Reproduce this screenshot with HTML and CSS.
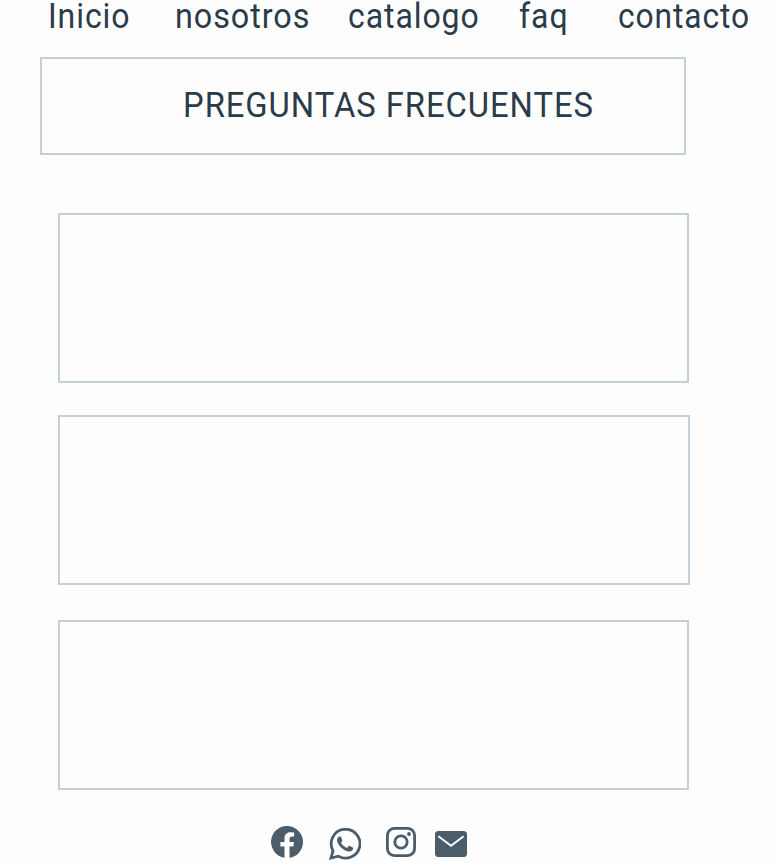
FILE: index.html
```html
<!DOCTYPE html>
<html lang="es">
<head>
<meta charset="utf-8">
<title>Preguntas frecuentes</title>
<link rel="stylesheet" href="styles.css">
</head>
<body>
<nav class="nav">
<a class="inicio">Inicio</a><a class="nosotros">nosotros</a><a class="catalogo">catalogo</a><a class="faq">faq</a><a class="contacto">contacto</a>
</nav>
<main>
<header class="title"><h1>PREGUNTAS FRECUENTES</h1></header>
<section class="panel"></section>
<section class="panel wide"></section>
<section class="panel last"></section>
</main>
<footer class="social">
<svg class="facebook" width="32" height="32" viewBox="0 0 32 32"><path fill="currentColor" d="M32 16A16 16 0 1 0 13.5 31.8V20.6H9.4V16h4.1v-3.5c0-4 2.4-6.2 6-6.2 1.8 0 3.6.3 3.6.3v3.9h-2c-2 0-2.6 1.2-2.6 2.5v3H23l-.7 4.6h-3.8v11.2A16 16 0 0 0 32 16Z"/></svg>
<svg class="whatsapp" width="32" height="32" viewBox="0 0 24 24"><path fill="currentColor" d="M17.47 14.38c-.3-.15-1.76-.87-2.03-.97-.27-.1-.47-.15-.67.15-.2.3-.77.97-.94 1.16-.17.2-.35.22-.64.08-.3-.15-1.26-.46-2.39-1.48-.88-.79-1.48-1.76-1.65-2.06-.17-.3-.02-.46.13-.6.13-.14.3-.35.45-.53.15-.17.2-.3.3-.5.1-.2.05-.37-.03-.52-.07-.15-.67-1.61-.91-2.2-.24-.59-.49-.51-.67-.51h-.57c-.2 0-.52.07-.79.37-.27.3-1.04 1.02-1.04 2.48s1.06 2.87 1.21 3.07c.15.2 2.1 3.2 5.08 4.49.7.3 1.26.49 1.69.62.71.23 1.36.2 1.87.12.57-.08 1.76-.72 2.01-1.41.25-.7.25-1.29.17-1.41-.07-.13-.27-.2-.57-.35Z"/><path fill="none" stroke="currentColor" stroke-width="2.1" d="M1.5 22.5 3 17A10.8 10.8 0 1 1 7 21.1Z"/></svg>
<svg class="instagram" width="30" height="30" viewBox="0 0 30 30"><rect x="1.4" y="1.4" width="27.2" height="27.2" rx="7" fill="none" stroke="currentColor" stroke-width="2.8"/><circle cx="15" cy="15" r="6.2" fill="none" stroke="currentColor" stroke-width="2.8"/><circle cx="23" cy="7" r="1.9" fill="currentColor"/></svg>
<svg class="mail" width="32" height="26" viewBox="0 0 32 26"><rect width="32" height="26" rx="3.5" fill="currentColor"/><path d="m3.4 5.3 12.6 9.4 12.6-9.4" fill="none" stroke="#fefefe" stroke-width="2"/></svg>
</footer>
</body>
</html>
```
FILE: styles.css
```css
* { box-sizing: border-box; }
body {
  margin: 0;
  height: 863px;
  background: #fefefe;
  color: #2a3b49;
  font-family: Roboto, "Liberation Sans", sans-serif;
}
.nav {
  display: grid;
  grid-template-columns: 127px 173px 171px 99px 158px;
  height: 57px;
  padding-left: 48px;
  font-size: 35px;
  line-height: 34px;
  letter-spacing: 1px;
}
.nav a {
  justify-self: start;
  height: 34px;
  transform: scaleX(.915);
  transform-origin: left;
}
.nav .nosotros { transform: scaleX(.925); }
.nav .contacto { transform: scaleX(.907); }
main { display: flow-root; }
.title {
  width: 646px;
  height: 98px;
  margin-left: 40px;
  padding: 31px 0 0 141px;
  border: 2px solid #c3cfda;
}
.title h1 {
  margin: 0;
  font-size: 35px;
  font-weight: 400;
  line-height: 32px;
  letter-spacing: 1px;
  white-space: nowrap;
  transform: scaleX(.937);
  transform-origin: left;
}
.panel {
  width: 631px;
  height: 170px;
  margin: 58px 0 0 58px;
  border: 2px solid #c3cfda;
}
.panel.wide { width: 632px; margin-top: 32px; }
.panel.last { margin-top: 35px; }
.social {
  display: flex;
  align-items: flex-start;
  padding: 36px 0 0 271px;
  color: #4b5c6b;
}
.social svg { flex: none; }
.whatsapp { margin: 2px 0 0 26px; }
.instagram { margin: 1px 0 0 25px; }
.mail { margin: 5px 0 0 19px; }
```
